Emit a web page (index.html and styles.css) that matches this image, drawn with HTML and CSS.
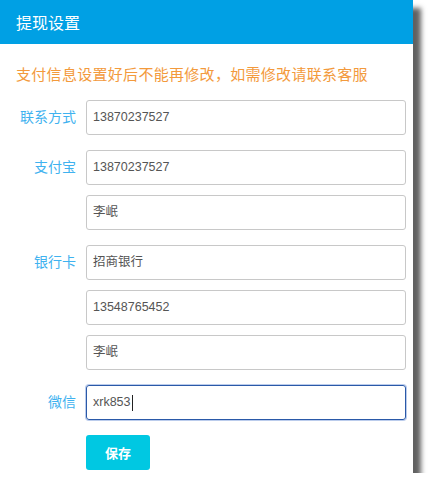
FILE: index.html
```html
<!DOCTYPE html>
<html lang="zh-CN">
<head>
<meta charset="utf-8">
<title>提现设置</title>
<link rel="stylesheet" href="styles.css">
</head>
<body>
<div class="panel">
  <div class="header">提现设置</div>
  <div class="body">
    <p class="notice">支付信息设置好后不能再修改，如需修改请联系客服</p>
    <div class="form">
      <div class="group">
        <div class="label">联系方式</div>
        <div class="fields">
          <div class="field">13870237527</div>
        </div>
      </div>
      <div class="group">
        <div class="label">支付宝</div>
        <div class="fields">
          <div class="field">13870237527</div>
          <div class="field">李岷</div>
        </div>
      </div>
      <div class="group">
        <div class="label">银行卡</div>
        <div class="fields">
          <div class="field">招商银行</div>
          <div class="field">13548765452</div>
          <div class="field">李岷</div>
        </div>
      </div>
      <div class="group">
        <div class="label">微信</div>
        <div class="fields">
          <div class="field focus">xrk853<span class="caret"></span></div>
        </div>
      </div>
      <div class="group">
        <div class="label"></div>
        <div class="fields">
          <button class="save">保存</button>
        </div>
      </div>
    </div>
  </div>
</div>
</body>
</html>
```
FILE: styles.css
```css
html, body {
  margin: 0;
  padding: 0;
  background: #fff;
}
body {
  font-family: "Liberation Sans", "Noto Sans CJK SC", sans-serif;
}
.panel {
  width: 413px;
  background: #fff;
  box-shadow: 8px 8px 5px rgba(0, 0, 0, 0.62);
}
.header {
  height: 44px;
  background: #00a0e4;
  color: #fff;
  font-family: "Noto Sans CJK SC", sans-serif;
  font-size: 16px;
  line-height: 44px;
  padding-left: 16px;
}
.body {
  padding: 0 0 3px 0;
}
.notice {
  margin: 0;
  padding: 20px 0 0 16px;
  height: 20px;
  line-height: 20px;
  font-family: "Noto Sans CJK SC", sans-serif;
  font-size: 15px;
  letter-spacing: 0.3px;
  color: #f39a3c;
}
.form {
  margin-top: 16px;
  display: flex;
  flex-direction: column;
  gap: 15px;
}
.group {
  display: flex;
  align-items: flex-start;
}
.label {
  width: 76px;
  margin-right: 10px;
  height: 35px;
  line-height: 33px;
  text-align: right;
  font-family: "Noto Sans CJK SC", sans-serif;
  font-size: 14px;
  color: #3fb2ef;
}
.fields {
  width: 320px;
  display: flex;
  flex-direction: column;
  gap: 10px;
}
.field {
  box-sizing: border-box;
  height: 35px;
  border: 1px solid #c8c8c8;
  border-radius: 3px;
  padding-left: 6px;
  line-height: 33px;
  font-size: 12.5px;
  color: #555;
  display: flex;
  align-items: center;
}
.field.focus {
  border: 1px solid #2a59a8;
  box-shadow: 0 0 0 1px rgba(60, 110, 200, 0.35);
}
.caret {
  display: inline-block;
  width: 1px;
  height: 16px;
  background: #222;
  margin-left: 1px;
}
.save {
  width: 64px;
  height: 35px;
  border: none;
  border-radius: 3px;
  background: #00c8e2;
  color: #fff;
  font-family: "Noto Sans CJK SC", sans-serif;
  font-size: 13px;
  font-weight: bold;
  padding: 0;
}
```
